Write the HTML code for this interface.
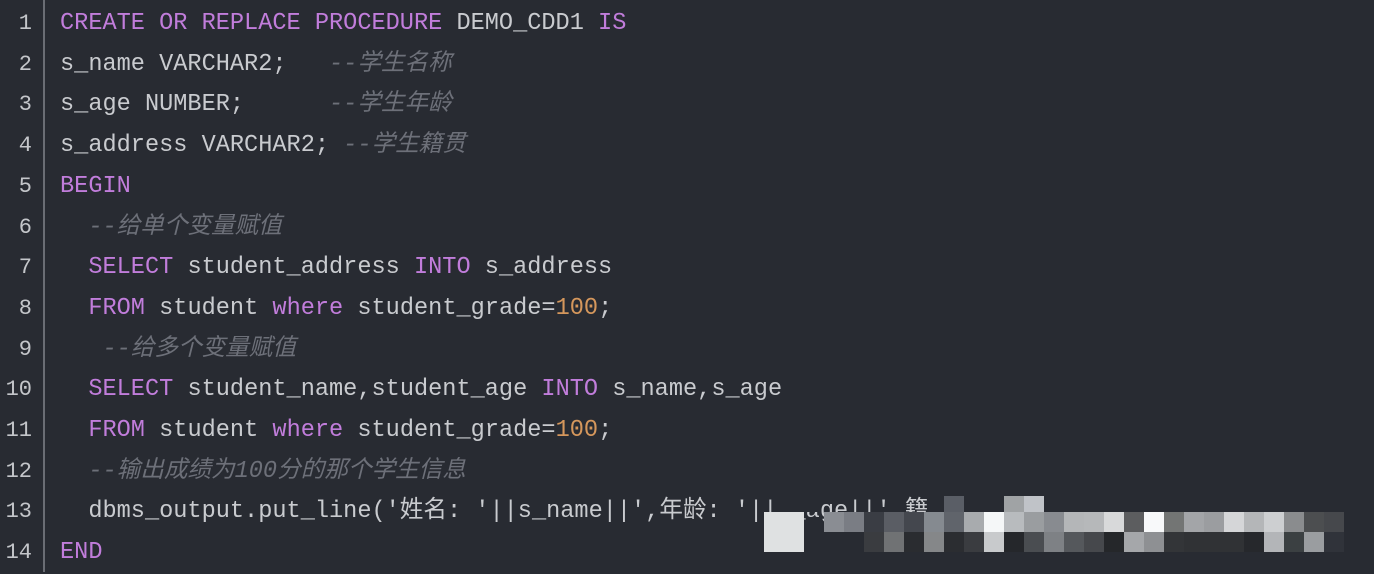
<!DOCTYPE html>
<html><head><meta charset="utf-8"><style>
html,body{margin:0;padding:0;background:#282b32;width:1374px;height:572px;overflow:hidden}
.g{position:absolute;left:0;top:4px;width:32px;text-align:right;font:22px/40.7px "Liberation Mono","DejaVu Sans Mono",monospace;color:#c4c6ca}
.bar{position:absolute;left:43px;top:0;width:2px;height:572px;background:#6a6d74}
.c{position:absolute;left:60px;top:4px;font:23.6px/40.7px "Liberation Mono","Noto Sans CJK SC",monospace;color:#c9cbcf;white-space:pre}
.k{color:#c17ddb}.n{color:#d5975c}.m{color:#6d7079;font-style:italic}
.px{position:absolute;width:20px;height:20px}
</style></head><body>
<div class="g">1<br>2<br>3<br>4<br>5<br>6<br>7<br>8<br>9<br>10<br>11<br>12<br>13<br>14</div>
<div class="bar"></div>
<div class="c"><span class="k">CREATE OR REPLACE PROCEDURE</span> DEMO_CDD1 <span class="k">IS</span>
s_name VARCHAR2;   <span class="m">--学生名称</span>
s_age NUMBER;      <span class="m">--学生年龄</span>
s_address VARCHAR2; <span class="m">--学生籍贯</span>
<span class="k">BEGIN</span>
  <span class="m">--给单个变量赋值</span>
  <span class="k">SELECT</span> student_address <span class="k">INTO</span> s_address
  <span class="k">FROM</span> student <span class="k">where</span> student_grade=<span class="n">100</span>;
   <span class="m">--给多个变量赋值</span>
  <span class="k">SELECT</span> student_name,student_age <span class="k">INTO</span> s_name,s_age
  <span class="k">FROM</span> student <span class="k">where</span> student_grade=<span class="n">100</span>;
  <span class="m">--输出成绩为100分的那个学生信息</span>
  dbms_output.put_line('姓名: '||s_name||',年龄: '||s_age||',籍
<span class="k">END</span></div>
<div id="p"></div>
<script>
var t=["8a8d93","7a7d84","3a3d44","5a5d64","44474e","858a90","60646b","a8abae","f5f7f8","b8bbbe","9a9da0","888b90","b4b6b8","b6b8ba","d8d9da","5c5d5f","f8f9fa","737574","a3a5a8","9b9da0","d5d6d8","b4b6b8","cdcfd1","8a8c8e","4c4e50","46484c"];
var b=["282b32","282b32","3a3c40","707274","2a2c30","858789","2b2d31","3a3c40","c8cacc","25272b","4a4d51","7e8185","55585c","46484c","25272a","a5a7aa","8e9093","333538","303235","303235","303235","26282c","b3b5b8","3b4042","9a9da0","30333a"];
var h="";
h+='<div class="px" style="left:778px;top:498px;width:40px;height:14px;background:#282b32"></div>';
for(var i=0;i<26;i++){var x=824+i*20;
h+='<div class="px" style="left:'+x+'px;top:512px;background:#'+t[i]+'"></div>';
h+='<div class="px" style="left:'+x+'px;top:532px;background:#'+b[i]+'"></div>';}
h+='<div class="px" style="left:764px;top:512px;width:40px;height:40px;background:#dfe1e2"></div>';
h+='<div class="px" style="left:944px;top:496px;height:16px;background:#5a5e66"></div>';
h+='<div class="px" style="left:1004px;top:496px;height:16px;background:#a0a3a5"></div>';
h+='<div class="px" style="left:1024px;top:496px;height:16px;background:#c0c3c8"></div>';
document.getElementById('p').innerHTML=h;
</script>
</body></html>
